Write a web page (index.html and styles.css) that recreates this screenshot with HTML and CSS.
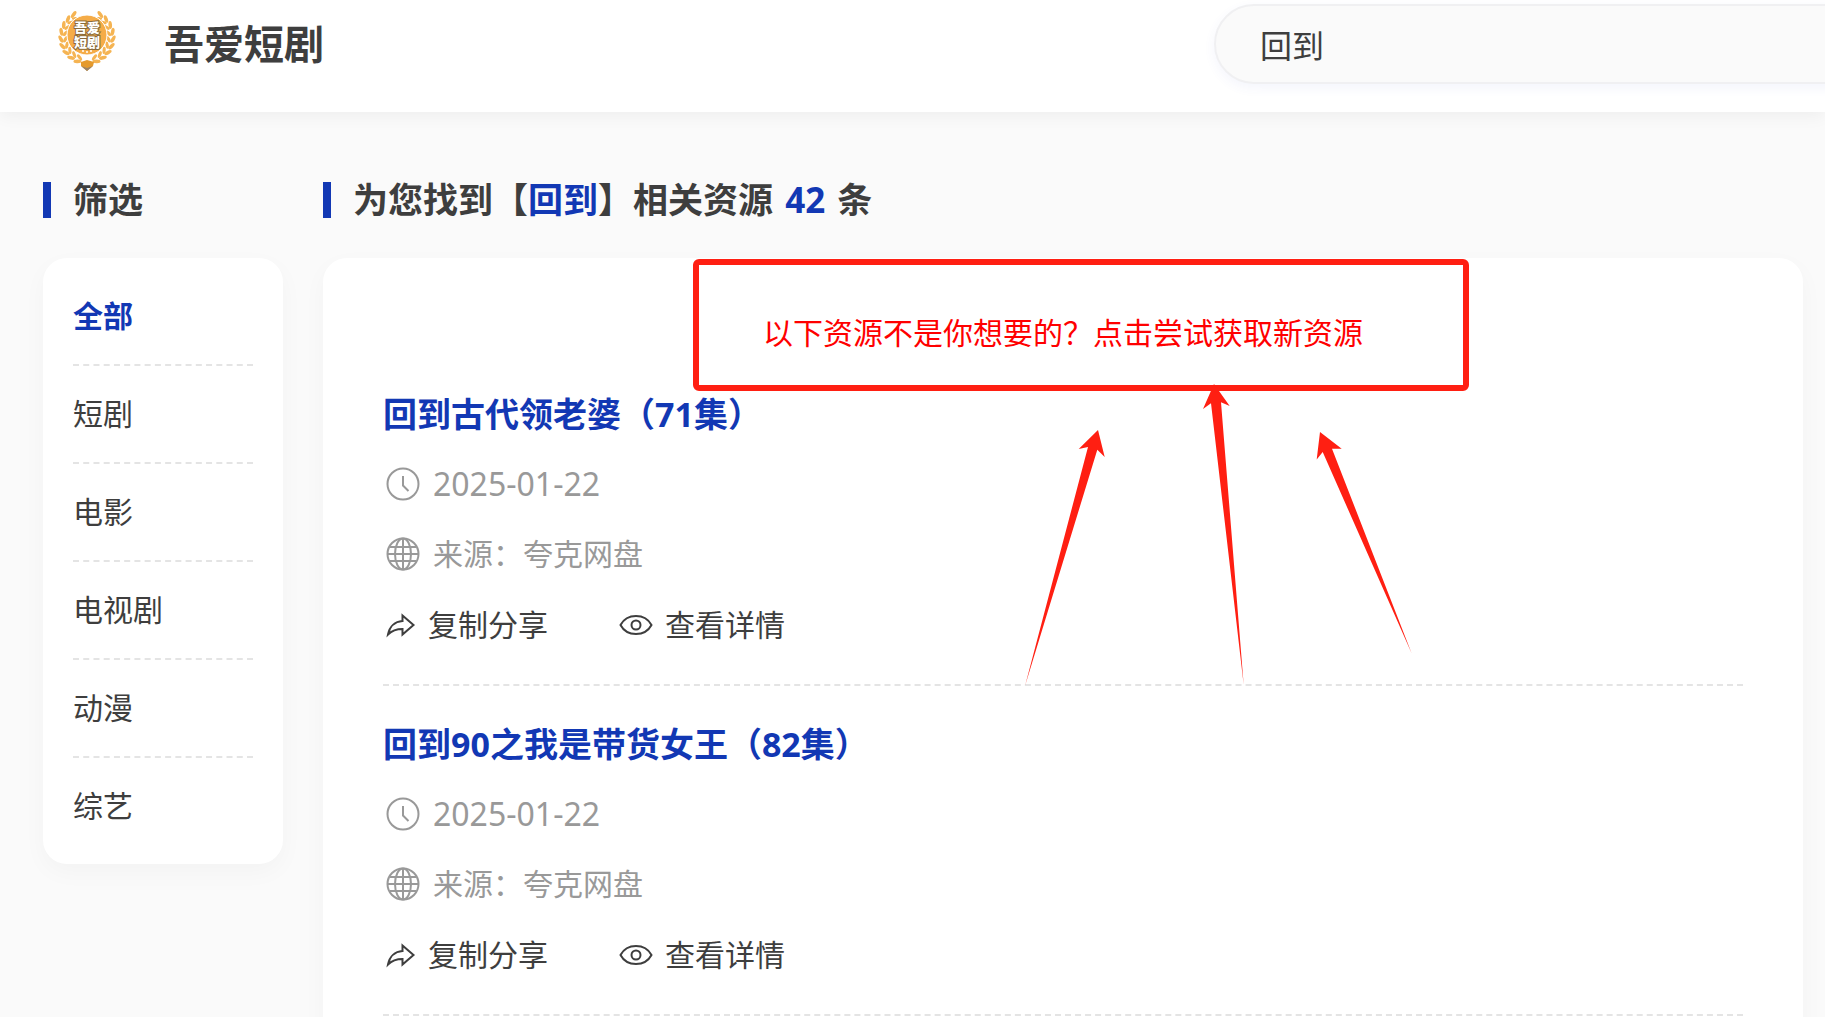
FILE: index.html
```html
<!DOCTYPE html>
<html lang="zh-CN">
<head>
<meta charset="utf-8">
<title>吾爱短剧</title>
<link rel="stylesheet" href="styles.css">
</head>
<body>
<svg class="sprite" aria-hidden="true">
  <symbol id="i-clock" viewBox="0 0 36 36"><circle cx="18" cy="18" r="15.5"/><path d="M18 10v9.500l5.500 5.500"/></symbol>
  <symbol id="i-globe" viewBox="0 0 36 36"><circle cx="18" cy="18" r="15.500"/><ellipse cx="18" cy="18" rx="8" ry="15.500"/><path d="M18 2.500v31M2.500 18h31M5 11h26M5 25h26"/></symbol>
  <symbol id="i-share" viewBox="0 0 32 36"><path d="M17.500 8.500l11 9.500-11 9.500v-5.500C11 22 7 23.500 3 27.500 4.500 19.500 10 14.500 17.500 14z"/></symbol>
  <symbol id="i-eye" viewBox="0 0 36 36"><path d="M2.500 18C6 11.500 11.500 9 18 9s12 2.500 15.500 9C30 24.500 24.500 27 18 27S6 24.500 2.500 18z"/><circle cx="18" cy="18" r="4.500"/></symbol>
</svg>
<header class="header">
  <a class="brand" href="#">
    <svg class="logo" viewBox="0 0 60 60" aria-hidden="true">
      <defs>
        <g id="sprig">
          <ellipse cx="27" cy="-3" rx="4" ry="1.800" transform="rotate(-30 27 -3)"/>
          <ellipse cx="27" cy="1.500" rx="3.600" ry="1.600" transform="rotate(25 27 1.500)"/>
        </g>
        <g id="branch">
          <use href="#sprig" transform="rotate(-24 30 23)"/>
          <use href="#sprig" transform="rotate(-40 30 23)"/>
          <use href="#sprig" transform="rotate(-56 30 23)"/>
          <use href="#sprig" transform="rotate(-72 30 23)"/>
          <use href="#sprig" transform="rotate(-88 30 23)"/>
          <use href="#sprig" transform="rotate(-104 30 23)"/>
          <use href="#sprig" transform="rotate(-120 30 23)"/>
          <use href="#sprig" transform="rotate(-136 30 23)"/>
          <use href="#sprig" transform="rotate(-152 30 23)"/>
        </g>
      </defs>
      <g fill="#f5b453">
        <use href="#branch"/>
        <use href="#branch" transform="matrix(-1 0 0 1 60 0)"/>
      </g>
      <circle cx="30" cy="21" r="20" fill="#f5ac48" stroke="#fff"/>
      <path d="M24 48l6-2 7 2-1 4-6 5-6-5z" fill="#e59a2c"/>
      <path d="M24 52l6 5 6-5-6 2z" fill="#9a8468"/>
      <text class="logo-text" x="30" y="18">吾爱</text>
      <text class="logo-text" x="30" y="33">短剧</text>
      <g fill="#fff"><circle cx="26" cy="37" r="1"/><circle cx="30" cy="38" r="1"/><circle cx="34" cy="37" r="1"/></g>
    </svg>
    <span class="brand-name">吾爱短剧</span>
  </a>
  <form class="search"><input class="search-input" type="text" aria-label="搜索" value="回到"></form>
</header>
<div class="page">
  <aside>
    <h2 class="heading">筛选</h2>
    <nav class="card filters">
      <a class="filter active" href="#">全部</a>
      <a class="filter" href="#">短剧</a>
      <a class="filter" href="#">电影</a>
      <a class="filter" href="#">电视剧</a>
      <a class="filter" href="#">动漫</a>
      <a class="filter" href="#">综艺</a>
    </nav>
  </aside>
  <main>
    <h2 class="heading">为您找到【<em>回到</em>】相关资源 <em class="count">42</em> 条</h2>
    <div class="card results">
      <a class="notice" href="#">以下资源不是你想要的？点击尝试获取新资源</a>
      <article class="item">
        <h3 class="title"><a href="#">回到古代领老婆（71集）</a></h3>
        <p class="meta date"><svg class="icon"><use href="#i-clock"/></svg>2025-01-22</p>
        <p class="meta"><svg class="icon"><use href="#i-globe"/></svg>来源：夸克网盘</p>
        <div class="actions">
          <button class="action" type="button"><svg class="icon share"><use href="#i-share"/></svg>复制分享</button>
          <button class="action" type="button"><svg class="icon"><use href="#i-eye"/></svg>查看详情</button>
        </div>
      </article>
      <article class="item">
        <h3 class="title"><a href="#">回到90之我是带货女王（82集）</a></h3>
        <p class="meta date"><svg class="icon"><use href="#i-clock"/></svg>2025-01-22</p>
        <p class="meta"><svg class="icon"><use href="#i-globe"/></svg>来源：夸克网盘</p>
        <div class="actions">
          <button class="action" type="button"><svg class="icon share"><use href="#i-share"/></svg>复制分享</button>
          <button class="action" type="button"><svg class="icon"><use href="#i-eye"/></svg>查看详情</button>
        </div>
      </article>
      <div class="callout" aria-hidden="true">
        <svg class="arrows" viewBox="0 0 776 428">
          <path d="M332 427L395 188 385.700 190 405 171 411.700 198 404.300 190.700z"/>
          <path d="M550.700 426L518 144.300 510 150 521 125 536.700 147 528 143.300z"/>
          <path d="M718.700 394.500L629.700 193 623.700 200.500 627 173 648.700 189.700 639 189.700z"/>
        </svg>
      </div>
    </div>
  </main>
</div>
</body>
</html>
```
FILE: styles.css
```css
* { box-sizing: border-box; }
body {
  margin: 0;
  background: #fafafa;
  color: #3e3e3e;
  font-family: "Noto Sans", "Noto Sans CJK SC", sans-serif;
  font-size: 30px;
  overflow-x: hidden;
}
h2, h3, p { margin: 0; }
a { color: inherit; text-decoration: none; }
.sprite { display: none; }

.header {
  display: flex;
  justify-content: space-between;
  height: 112px;
  padding: 4px 0 28px 57px;
  background: #fff;
  box-shadow: 0 4px 16px rgba(0, 0, 0, .05);
}
.brand { display: flex; align-items: center; gap: 47px; }
.logo { width: 60px; height: 60px; overflow: visible; }
.logo-text {
  font-size: 13px;
  font-weight: 900;
  text-anchor: middle;
  fill: #fff;
  stroke: #8a6a3c;
  stroke-width: 2px;
  paint-order: stroke;
}
.brand-name { font-size: 40px; font-weight: 700; line-height: 80px; }
.search { flex: 0 0 680px; margin-right: -69px; }
.search-input {
  width: 100%;
  height: 80px;
  padding: 0 44px;
  border: 2px solid #f0f0f2;
  border-radius: 40px;
  background: #fafafa;
  box-shadow: 0 4px 12px rgba(60, 80, 200, .06);
  color: inherit;
  font: inherit;
  font-size: 32px;
  outline: 0;
}

.page {
  display: grid;
  grid-template-columns: 240px minmax(0, 1fr);
  gap: 40px;
  align-items: start;
  padding: 70px 22px 40px 43px;
}
.heading {
  height: 36px;
  margin-bottom: 40px;
  padding-left: 22px;
  border-left: 8px solid #1238b4;
  font-size: 35px;
  line-height: 36px;
  white-space: nowrap;
}
.heading em { color: #1238b4; font-style: normal; }
.heading .count { margin: 0 3px; }
.card {
  border-radius: 24px;
  background: #fff;
  box-shadow: 0 8px 24px rgba(0, 0, 0, .03);
}
.filters { padding: 10px 30px; }
.filter {
  display: block;
  border-bottom: 2px dashed #e4e4e4;
  line-height: 96px;
}
.filter:last-child { border-bottom: 0; }
.filter.active { color: #1238b4; font-weight: 700; }

.results { position: relative; padding: 60px; }
.notice {
  display: block;
  margin-bottom: 8px;
  color: #f00;
  line-height: 30px;
  text-align: center;
}
.item {
  display: flex;
  flex-direction: column;
  gap: 26px;
  padding: 36px 0;
  border-bottom: 2px dashed #e4e4e4;
}
.title { color: #1238b4; font-size: 34px; line-height: 44px; }
.meta {
  display: flex;
  align-items: center;
  gap: 12px;
  padding-left: 2px;
  color: #999;
  line-height: 44px;
}
.date { font-size: 32px; }
.icon {
  width: 36px;
  height: 36px;
  fill: none;
  stroke: currentColor;
  stroke-width: 2px;
}
.share { width: 32px; }
.actions { display: flex; gap: 70px; padding-left: 2px; }
.action {
  display: flex;
  align-items: center;
  gap: 11px;
  padding: 0;
  border: 0;
  background: none;
  color: inherit;
  font: inherit;
  line-height: 46px;
}

.callout {
  position: absolute;
  top: 1px;
  left: 50%;
  width: 776px;
  height: 132px;
  margin-left: -370px;
  border: 6px solid #ff1f12;
  border-radius: 6px;
  pointer-events: none;
}
.arrows {
  position: absolute;
  top: -6px;
  left: -6px;
  width: 776px;
  height: 428px;
  fill: #ff1f12;
}
```
